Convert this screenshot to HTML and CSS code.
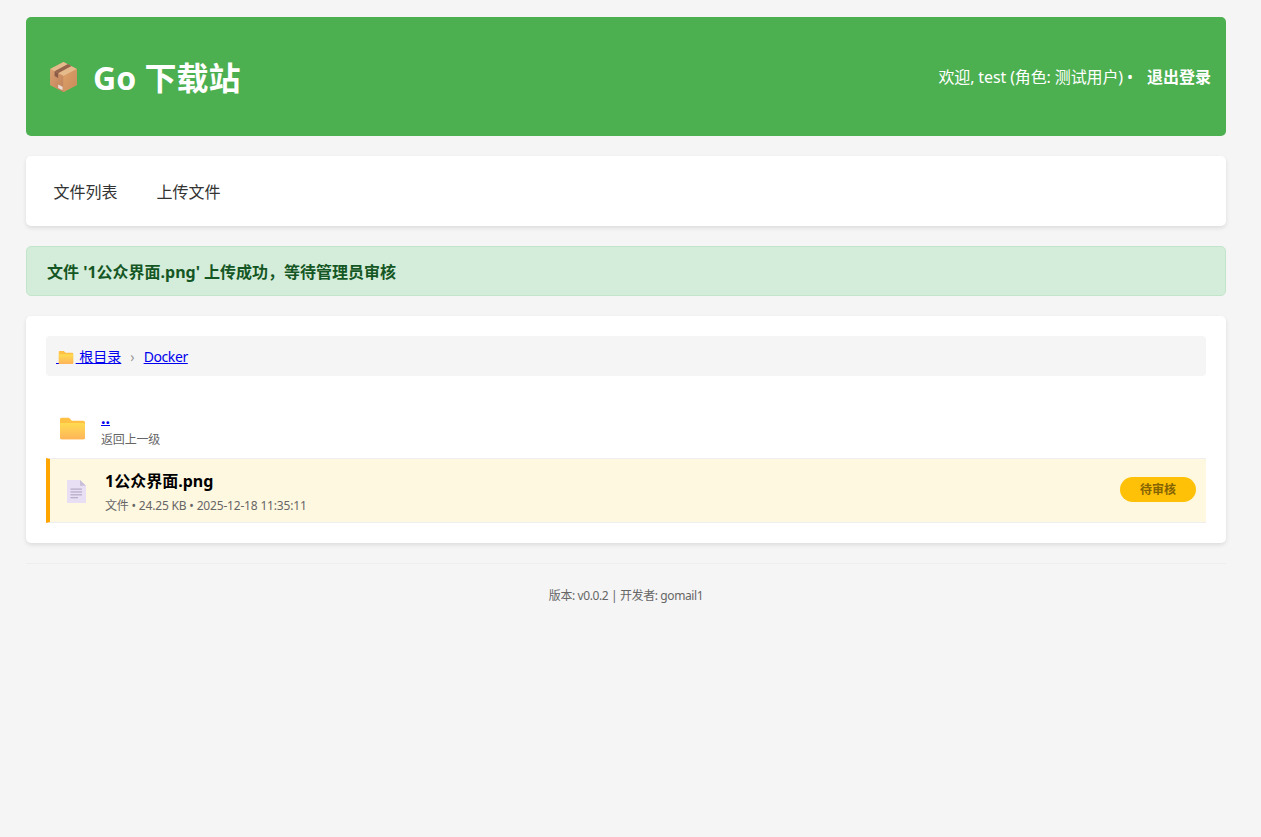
FILE: index.html
```html
<!DOCTYPE html>
<html lang="zh-CN">
<head>
<meta charset="utf-8">
<title>Go 下载站</title>
<link rel="stylesheet" href="styles.css">
</head>
<body>
<div class="container">
  <header class="header">
    <h1 class="brand">
      <svg class="brand-icon" viewBox="0 0 32 36" aria-hidden="true">
        <defs>
          <linearGradient id="boxL" x1="0" y1="0" x2="1" y2="1"><stop offset="0" stop-color="#d9a070"/><stop offset="1" stop-color="#c08058"/></linearGradient>
          <linearGradient id="boxR" x1="0" y1="0" x2="1" y2="1"><stop offset="0" stop-color="#dfa268"/><stop offset="1" stop-color="#c8895a"/></linearGradient>
        </defs>
        <path d="M16 1 L31 9 V27 L16 35 L1 27 V9 Z" fill="#d39a6a"/>
        <path d="M16 1 L31 9 L16 17 L1 9 Z" fill="#e6bb8c"/>
        <path d="M1 9 L16 17 V35 L1 27 Z" fill="url(#boxL)"/>
        <path d="M31 9 L16 17 V35 L31 27 Z" fill="url(#boxR)"/>
        <path d="M6 11.5 L21 3.5 L25 5.7 L10 13.7 Z" fill="#96644a"/>
        <path d="M6 11.5 L10 13.7 V19 L6 17 Z" fill="#8a5c48"/>
        <path d="M10 26.5 L15 29 V33 L10 30.5 Z" fill="#ecdcd4"/>
      </svg>
      <span>Go 下载站</span>
    </h1>
    <div class="user-info">欢迎, test (角色: 测试用户) • <a class="logout" href="#">退出登录</a></div>
  </header>

  <nav class="nav card">
    <a href="#">文件列表</a>
    <a href="#">上传文件</a>
  </nav>

  <div class="alert">文件 '1公众界面.png' 上传成功，等待管理员审核</div>

  <main class="card files">
    <div class="breadcrumb">
      <a href="#">&nbsp;<svg class="crumb-icon" viewBox="0 0 16 14" aria-hidden="true"><use href="#folder-shape"/></svg>&nbsp;根目录</a>
      <span class="sep">›</span>
      <a class="crumb-latin" href="#">Docker</a>
    </div>

    <svg class="defs" aria-hidden="true">
      <defs>
        <linearGradient id="fold" x1="0" y1="0" x2="0" y2="1"><stop offset="0" stop-color="#ffdc50"/><stop offset="1" stop-color="#ffb45a"/></linearGradient>
        <symbol id="folder-shape" viewBox="0 0 16 14">
          <path d="M0 1.2 Q0 0 1.2 0 H5.6 L7.6 2 H14.8 Q16 2 16 3.2 V12.8 Q16 14 14.8 14 H1.2 Q0 14 0 12.8 Z" fill="#ffc043"/>
          <path d="M0 3.4 H14.8 Q16 3.4 16 4.6 V12.8 Q16 14 14.8 14 H1.2 Q0 14 0 12.8 Z" fill="url(#fold)"/>
        </symbol>
      </defs>
    </svg>

    <ul class="file-list">
      <li class="file-row parent">
        <span class="file-icon"><svg class="folder-icon" viewBox="0 0 16 14" aria-hidden="true"><use href="#folder-shape"/></svg></span>
        <div class="file-info">
          <a class="file-name" href="#">..</a>
          <div class="file-meta">返回上一级</div>
        </div>
      </li>
      <li class="file-row pending">
        <span class="file-icon"><svg class="doc-icon" viewBox="0 0 19 24" preserveAspectRatio="none" aria-hidden="true">
          <path d="M0 0 H13 L19 6 V24 H0 Z" fill="#e8dff5"/>
          <path d="M13 0 L19 6 H13 Z" fill="#c9bfd6"/>
          <path d="M3.5 9.5 H15 M3.5 12.5 H15 M3.5 15.5 H15 M3.5 18.5 H11" stroke="#a79fb8" stroke-width="1" fill="none"/>
        </svg></span>
        <div class="file-info">
          <div class="file-name plain">1公众界面.png</div>
          <div class="file-meta">文件 • 24.25 KB • 2025-12-18 11:35:11</div>
        </div>
        <span class="badge">待审核</span>
      </li>
    </ul>
  </main>

  <footer class="footer">版本: v0.0.2 | 开发者: gomail1</footer>
</div>
</body>
</html>
```
FILE: styles.css
```css
* { box-sizing: border-box; }
html, body { margin: 0; padding: 0; }
body {
  background: #f5f5f5;
  color: #333;
  font-family: "Noto Sans", "Noto Sans CJK SC", sans-serif;
  font-size: 16px;
  line-height: 1.5;
}
.container { width: 1200px; margin: 17px 0 0 26px; }
.card {
  background: #fff;
  border-radius: 5px;
  box-shadow: 0 2px 4px rgba(0,0,0,.1);
}
.header {
  height: 119px;
  padding: 0 15px 0 20px;
  display: flex;
  align-items: center;
  justify-content: space-between;
  background: #4caf50;
  color: #fff;
  border-radius: 5px;
  margin-bottom: 20px;
}
.brand { margin: 0; display: flex; align-items: center; font-size: 32px; line-height: 48px; font-weight: 700; }
.brand > span { padding-top: 3px; }
.brand-icon { width: 29px; height: 32px; margin: 1px 15px 0 3px; }
.user-info { font-size: 16px; letter-spacing: -.12px; }
.logout { color: #fff; font-weight: 700; text-decoration: none; margin-left: 10px; letter-spacing: 0; }
.nav { height: 70px; padding: 2px 27.5px 0; display: flex; align-items: center; gap: 39px; margin-bottom: 20px; }
.nav a { color: #333; text-decoration: none; font-size: 16px; }
.alert {
  height: 50px;
  padding: 1px 20px 0;
  display: flex;
  align-items: center;
  background: #d4edda;
  border: 1px solid #c3e6cb;
  border-radius: 5px;
  color: #155724;
  font-weight: 700;
  margin-bottom: 20px;
}
.files { padding: 20px; height: 227px; margin-bottom: 20px; }
.breadcrumb {
  height: 40px;
  padding: 0 10px;
  display: flex;
  align-items: center;
  gap: 9px;
  background: #f5f5f5;
  border-radius: 4px;
  font-size: 14px;
}
.breadcrumb a { color: #00e; }
.crumb-icon { width: 16px; height: 13px; vertical-align: -2px; margin: 0 2px 0 -2px; }
.crumb-latin { letter-spacing: -.4px; }
.sep { color: #999; }
.defs { position: absolute; width: 0; height: 0; }
.file-list { list-style: none; margin: 20px 0 0; padding: 0; }
.file-row { display: flex; align-items: center; padding: 10px; }
.parent { height: 62px; padding: 13px 10px 11px; }
.parent .file-meta { margin-top: 3px; }
.parent .file-info { margin-top: 1px; }
.pending {
  height: 65px;
  background: #fff8e1;
  border-left: 4px solid #ffa500;
  border-top: 1px solid #eee;
  border-bottom: 1px solid #eee;
}
.pending .file-info { margin-top: 4px; }
.pending .file-meta { margin-top: 6px; }
.file-icon { flex: none; width: 45px; display: flex; }
.folder-icon { width: 25px; height: 23px; margin: 1px 0 0 4px; }
.doc-icon { width: 19px; height: 23px; margin: 2px 0 0 7px; }
.file-info { flex: 1; min-width: 0; }
.file-name { font-weight: 700; color: #00e; line-height: 20px; display: block; }
.file-name.plain { color: #000; }
.parent .file-name { font-size: 16px; }
.file-meta { font-size: 12px; color: #666; line-height: 18px; letter-spacing: -.18px; }
.badge {
  width: 76px;
  height: 25px;
  margin-bottom: 2px;
  border-radius: 13px;
  background: #ffc107;
  color: #856404;
  font-size: 12px;
  font-weight: 700;
  display: flex;
  align-items: center;
  justify-content: center;
}
.footer {
  border-top: 1px solid #eee;
  padding-top: 23px;
  text-align: center;
  font-size: 12px;
  line-height: 18px;
  color: #666;
  letter-spacing: -.4px;
}
```
